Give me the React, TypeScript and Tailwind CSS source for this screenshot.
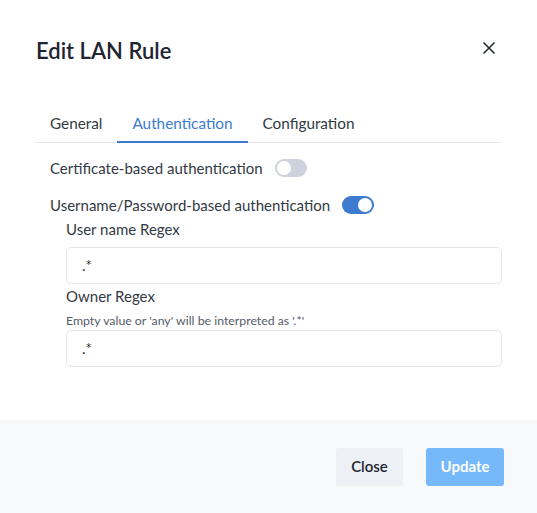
import React, { useState } from "react";

// Small switch used in the auth tab
const Toggle = ({ on }: { on: boolean }) => (
    <span
        className={`inline-flex h-[18px] w-[32px] items-center rounded-full p-[2px] ${
            on ? "justify-end bg-[#3d7bd0]" : "justify-start bg-[#cdd3dc]"
        }`}
    >
        <span className="h-[14px] w-[14px] rounded-full bg-white" />
    </span>
);

const TextField = ({ value }: { value: string }) => (
    <div className="flex h-[37px] w-full items-center rounded-[5px] border border-[#e3e6ea] px-[15px] text-[15px] text-[#333]">
        {value}
    </div>
);

const App = () => {
    const [tab] = useState("Authentication");
    const tabs = ["General", "Authentication", "Configuration"];

    return (
        <div
            className="flex h-[513px] w-[537px] flex-col bg-white text-[#333a44]"
            style={{ fontFamily: "Lato, 'Noto Sans', sans-serif" }}
        >
            {/* Header */}
            <div className="flex items-start justify-between pl-[36px] pr-[40px] pt-[35px]">
                <h1 className="text-[22px] font-semibold leading-[32px] text-[#1e2430]">Edit LAN Rule</h1>
                <button className="mt-[5px] text-[#1e2430]">
                    <svg width="16" height="16" viewBox="0 0 16 16" fill="none" stroke="currentColor" strokeWidth="1.5">
                        <path d="M2.5 2.5l11 11M13.5 2.5l-11 11" />
                    </svg>
                </button>
            </div>

            {/* Body */}
            <div className="flex-1 px-[35px] pt-[45px]">
                <div className="flex border-b border-[#e6e8eb]">
                    {tabs.map((t) => (
                        <div
                            key={t}
                            className={`-mb-px px-[15px] pb-[6px] text-[15.3px] leading-[23px] ${
                                t === tab ? "border-b-2 border-[#3d7bd0] text-[#3d7bd0]" : "text-[#333a44]"
                            }`}
                        >
                            {t}
                        </div>
                    ))}
                </div>

                <div className="pl-[15px] pt-[15px]">
                    <div className="flex items-center gap-[12px] text-[15px] leading-[20px]">
                        Certificate-based authentication
                        <Toggle on={false} />
                    </div>
                    <div className="mt-[17px] flex items-center gap-[12px] text-[15px] leading-[20px]">
                        Username/Password-based authentication
                        <Toggle on={true} />
                    </div>

                    <div className="pl-[16px]">
                        <div className="mt-[4px] text-[15px] leading-[20px]">User name Regex</div>
                        <div className="mt-[8px]">
                            <TextField value=".*" />
                        </div>
                        <div className="mt-[2px] text-[15px] leading-[20px]">Owner Regex</div>
                        <div className="mt-[7px] text-[12.3px] leading-[16px] text-[#555c68]">
                            Empty value or 'any' will be interpreted as '.*'
                        </div>
                        <div className="mt-[1px]">
                            <TextField value=".*" />
                        </div>
                    </div>
                </div>
            </div>

            {/* Footer */}
            <div className="flex h-[93px] items-center justify-end gap-[23px] bg-[#f8f9fb] pr-[33px]">
                <button className="h-[38px] w-[67px] rounded-[3px] bg-[#edf0f5] text-[15px] font-semibold text-[#1e2430]">
                    Close
                </button>
                <button className="h-[38px] w-[78px] rounded-[3px] bg-[#76b9fa] text-[15px] font-bold text-white">
                    Update
                </button>
            </div>
        </div>
    );
};

export default App;
